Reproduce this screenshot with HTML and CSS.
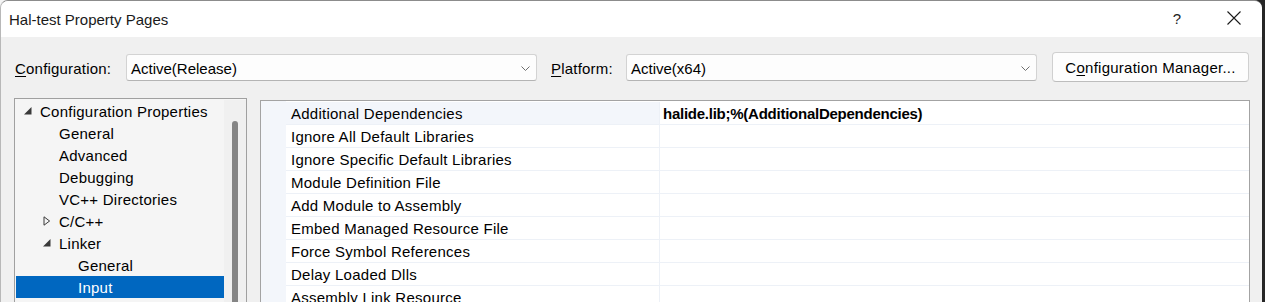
FILE: index.html
```html
<!DOCTYPE html>
<html>
<head>
<meta charset="utf-8">
<title>Hal-test Property Pages</title>
<link rel="stylesheet" href="styles.css">
</head>
<body>
<div class="window">
  <div class="titlebar">
    <div class="title">Hal-test Property Pages</div>
    <div class="tb-btn help">?</div>
    <div class="tb-btn close">
      <svg width="14" height="14" viewBox="0 0 14 14"><path d="M0.5 0.5 L13.5 13.5 M13.5 0.5 L0.5 13.5" stroke="#1a1a1a" stroke-width="1.1" fill="none"/></svg>
    </div>
  </div>

  <div class="config-row">
    <label class="lbl lbl-config"><u>C</u>onfiguration:</label>
    <div class="combo combo-config">
      <span class="combo-text">Active(Release)</span>
      <svg class="chev" width="9" height="5" viewBox="0 0 9 5"><path d="M0.5 0.5 L4.5 4.5 L8.5 0.5" stroke="#6e6e6e" fill="none"/></svg>
    </div>
    <label class="lbl lbl-platform"><u>P</u>latform:</label>
    <div class="combo combo-platform">
      <span class="combo-text">Active(x64)</span>
      <svg class="chev" width="9" height="5" viewBox="0 0 9 5"><path d="M0.5 0.5 L4.5 4.5 L8.5 0.5" stroke="#6e6e6e" fill="none"/></svg>
    </div>
    <button class="btn">C<u>o</u>nfiguration Manager...</button>
  </div>

  <div class="main">
    <div class="tree">
      <div class="tree-list">
        <div class="node l0"><span class="arrow"><svg width="8" height="8" viewBox="0 0 8 8"><path d="M7.5 0 L7.5 7.5 L0 7.5 Z" fill="#3a3a3a"/></svg></span><span>Configuration Properties</span></div>
        <div class="node l1"><span class="arrow"></span><span>General</span></div>
        <div class="node l1"><span class="arrow"></span><span>Advanced</span></div>
        <div class="node l1"><span class="arrow"></span><span>Debugging</span></div>
        <div class="node l1"><span class="arrow"></span><span>VC++ Directories</span></div>
        <div class="node l1"><span class="arrow"><svg width="8" height="10" viewBox="0 0 8 10"><path d="M1 0.8 L6.6 5 L1 9.2 Z" fill="none" stroke="#3a3a3a" stroke-width="1"/></svg></span><span>C/C++</span></div>
        <div class="node l1"><span class="arrow"><svg width="8" height="8" viewBox="0 0 8 8"><path d="M7.5 0 L7.5 7.5 L0 7.5 Z" fill="#3a3a3a"/></svg></span><span>Linker</span></div>
        <div class="node l2"><span class="arrow"></span><span>General</span></div>
        <div class="node l2 selected"><span class="arrow"></span><span>Input</span></div>
      </div>
      <div class="scrollbar"><div class="thumb"></div></div>
    </div>

    <div class="grid">
      <div class="gutter"></div>
      <div class="rows">
        <div class="row current"><div class="name">Additional Dependencies</div><div class="value bold">halide.lib;%(AdditionalDependencies)</div></div>
        <div class="row"><div class="name">Ignore All Default Libraries</div><div class="value"></div></div>
        <div class="row"><div class="name">Ignore Specific Default Libraries</div><div class="value"></div></div>
        <div class="row"><div class="name">Module Definition File</div><div class="value"></div></div>
        <div class="row"><div class="name">Add Module to Assembly</div><div class="value"></div></div>
        <div class="row"><div class="name">Embed Managed Resource File</div><div class="value"></div></div>
        <div class="row"><div class="name">Force Symbol References</div><div class="value"></div></div>
        <div class="row"><div class="name">Delay Loaded Dlls</div><div class="value"></div></div>
        <div class="row"><div class="name">Assembly Link Resource</div><div class="value"></div></div>
      </div>
    </div>
  </div>
</div>
</body>
</html>
```
FILE: styles.css
```css
* { box-sizing: border-box; }

html, body {
  margin: 0;
  height: 302px;
  overflow: hidden;
}

body {
  background: linear-gradient(to right, #f4f4f4 0 170px, #262626 170px);
  font-family: "Liberation Sans", Arial, sans-serif;
  font-size: 15px;
  color: #000;
  display: flex;
}

.window {
  width: 1262px;
  height: 302px;
  background: #f0f0f0;
  border-top: 1px solid #8c8c8c;
  border-left: 1px solid #b8b8b8;
  border-radius: 8px 8px 0 0;
  overflow: hidden;
  display: flex;
  flex-direction: column;
}

/* title bar */
.titlebar {
  height: 36px;
  background: #fff;
  display: flex;
  align-items: center;
  flex: none;
}
.title {
  flex: 1;
  padding-left: 8px;
  color: #1a1a1a;
}
.tb-btn {
  width: 46px;
  height: 36px;
  display: flex;
  align-items: center;
  justify-content: center;
}
.help {
  color: #222;
  font-size: 15px;
  padding-bottom: 2px;
  margin-right: 11px;
}
.close {
  margin-right: 5px;
  padding-bottom: 2px;
}

/* configuration row */
.config-row {
  display: flex;
  align-items: center;
  height: 30px;
  margin-top: 15px;
  flex: none;
}
.lbl {
  letter-spacing: 0.2px;
  padding-top: 2px;
  flex: none;
}
.lbl-config { width: 125px; padding-left: 14px; }
.lbl-platform { width: 75px; margin-left: 14px; }
u { text-decoration-thickness: 1px; text-underline-offset: 2px; }

.combo {
  height: 27px;
  background: #fdfdfd;
  border: 1px solid #d3d3d3;
  border-bottom-color: #b4b4b4;
  border-radius: 3px;
  display: flex;
  align-items: center;
  padding-left: 4px;
  padding-right: 6px;
  margin-top: 1px;
  flex: none;
}
.combo-config { width: 411px; }
.combo-platform { width: 411px; }
.combo-text { flex: 1; padding-top: 1px; }
.chev { flex: none; margin-top: 1px; }

.btn {
  margin-left: 15px;
  width: 197px;
  height: 30px;
  flex: none;
  background: #fdfdfd;
  border: 1px solid #d0d0d0;
  border-bottom-color: #bdbdbd;
  border-radius: 4px;
  font-family: "Liberation Sans", Arial, sans-serif;
  font-size: 15px;
  letter-spacing: 0.25px;
  color: #000;
  padding: 1px 0 0;
}

/* main area */
.main {
  display: flex;
  align-items: flex-start;
  margin-top: 16px;
  flex: 1;
  min-height: 0;
}

.tree {
  margin-left: 13px;
  width: 233px;
  height: 240px;
  border: 1px solid #a0a0a0;
  background: #f5f5f5;
  display: flex;
  padding: 1px 0 0 1px;
  flex: none;
}
.tree-list {
  width: 208px;
  flex: none;
}
.node {
  height: 22px;
  display: flex;
  align-items: center;
  letter-spacing: 0.25px;
  white-space: nowrap;
}
.node.l0 { padding-left: 8px; }
.node.l1 { padding-left: 27px; }
.node.l2 { padding-left: 46px; }
.node .arrow {
  width: 16px;
  flex: none;
  display: flex;
  align-items: center;
}
.node.selected {
  background: #0067c0;
  color: #fff;
}
.scrollbar {
  flex: 1;
  background: #f0f0f0;
  padding: 21px 0 0 8px;
}
.thumb {
  width: 6px;
  height: 220px;
  background: #858585;
  border-radius: 3px 3px 0 0;
}

.grid {
  margin-left: 13px;
  margin-top: 2px;
  width: 990px;
  height: 240px;
  border: 1px solid #a3a3a3;
  background: #fff;
  display: flex;
  flex: none;
}
.gutter {
  width: 25px;
  flex: none;
  background: #f3f6fb;
}
.rows {
  flex: 1;
  padding-top: 1px;
}
.row {
  display: grid;
  grid-template-columns: 374px 1fr;
  height: 23px;
  border-bottom: 1px solid #edf1f7;
}
.row .name {
  padding-left: 5px;
  display: flex;
  align-items: center;
  letter-spacing: 0.25px;
  border-right: 1px solid #edf1f7;
  white-space: nowrap;
}
.row.current .name { background: #f3f6fb; }
.row .value {
  padding-left: 3px;
  display: flex;
  align-items: center;
}
.value.bold {
  font-weight: bold;
  letter-spacing: -0.25px;
}
```
